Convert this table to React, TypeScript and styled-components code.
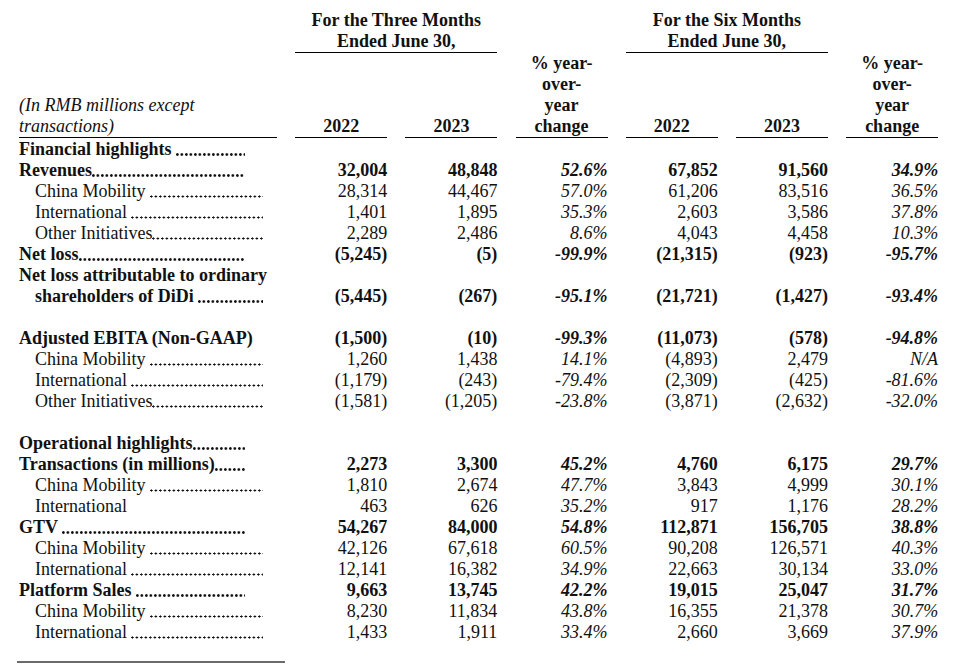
import React from 'react';
import styled, { createGlobalStyle } from 'styled-components';

const GlobalStyle = createGlobalStyle`
  html, body {
    margin: 0;
    padding: 0;
    background: #ffffff;
  }
  body {
    font-family: "Liberation Serif", "Times New Roman", serif;
    font-size: 18px;
    color: #111;
  }
`;

const COLS = '258px repeat(6, 92px)';

const Page = styled.div`
  padding: 9.7px 0 0 19px;
  width: 960px;
  height: 668px;
  box-sizing: border-box;
  overflow: hidden;
`;

const HeaderTop = styled.div`
  display: grid;
  grid-template-columns: ${COLS};
  column-gap: 18.2px;
  line-height: 21px;
`;

const GroupHead = styled.div<{ $col: number }>`
  grid-column: ${(p) => p.$col} / span 2;
  text-align: center;
  font-weight: bold;
  border-bottom: 1.5px solid #000;
`;

const HeaderBottom = styled.div`
  display: grid;
  grid-template-columns: ${COLS};
  column-gap: 18.2px;
  line-height: 21px;
  align-items: end;
`;

const LabelHead = styled.div`
  font-style: italic;
  border-bottom: 1.5px solid #000;
`;

const ColHead = styled.div`
  text-align: center;
  font-weight: bold;
  border-bottom: 1.5px solid #000;
`;

const Body = styled.div`
  padding-top: 1.5px;
`;

const Row = styled.div`
  display: grid;
  grid-template-columns: ${COLS};
  column-gap: 18.2px;
  line-height: 21px;
  height: 21px;
  white-space: nowrap;
`;

const Spacer = styled.div`
  height: 21px;
`;

const Label = styled.div<{ $indent?: boolean; $bold?: boolean; $end: number }>`
  display: flex;
  width: ${(p) => p.$end - 19}px;
  padding-left: ${(p) => (p.$indent ? 16 : 0)}px;
  box-sizing: border-box;
  font-weight: ${(p) => (p.$bold ? 'bold' : 'normal')};
`;

const LabelText = styled.span`
  white-space: pre;
`;

/* dot leader, drawn as a row of periods at the baseline */
const Leader = styled.span<{ $bold?: boolean }>`
  flex: 1 1 0;
  min-width: 0;
  height: 21px;
  background-image: radial-gradient(
    circle,
    #111 ${(p) => (p.$bold ? 1.15 : 0.9)}px,
    transparent ${(p) => (p.$bold ? 1.5 : 1.25)}px
  );
  background-size: 4.5px 21px;
  background-repeat: repeat-x;
  background-position: -0.9px 5.2px;
`;

const Num = styled.div<{ $bold?: boolean; $pct?: boolean }>`
  text-align: right;
  font-weight: ${(p) => (p.$bold ? 'bold' : 'normal')};
  font-style: ${(p) => (p.$pct ? 'italic' : 'normal')};
`;

const FootRule = styled.div`
  margin: 18px 0 0 -2px;
  width: 268px;
  height: 2px;
  background: #6b6b6b;
`;

type Line = {
  label: string;
  bold?: boolean;
  indent?: boolean;
  dots?: boolean;
  values?: string[];
};

const lines: (Line | null)[] = [
  { label: 'Financial highlights ', bold: true, dots: true },
  { label: 'Revenues', bold: true, dots: true, values: ['32,004', '48,848', '52.6%', '67,852', '91,560', '34.9%'] },
  { label: 'China Mobility ', indent: true, dots: true, values: ['28,314', '44,467', '57.0%', '61,206', '83,516', '36.5%'] },
  { label: 'International ', indent: true, dots: true, values: ['1,401', '1,895', '35.3%', '2,603', '3,586', '37.8%'] },
  { label: 'Other Initiatives', indent: true, dots: true, values: ['2,289', '2,486', '8.6%', '4,043', '4,458', '10.3%'] },
  { label: 'Net loss', bold: true, dots: true, values: ['(5,245)', '(5)', '-99.9%', '(21,315)', '(923)', '-95.7%'] },
  { label: 'Net loss attributable to ordinary', bold: true },
  { label: 'shareholders of DiDi ', bold: true, indent: true, dots: true, values: ['(5,445)', '(267)', '-95.1%', '(21,721)', '(1,427)', '-93.4%'] },
  null,
  { label: 'Adjusted EBITA (Non-GAAP)', bold: true, values: ['(1,500)', '(10)', '-99.3%', '(11,073)', '(578)', '-94.8%'] },
  { label: 'China Mobility ', indent: true, dots: true, values: ['1,260', '1,438', '14.1%', '(4,893)', '2,479', 'N/A'] },
  { label: 'International ', indent: true, dots: true, values: ['(1,179)', '(243)', '-79.4%', '(2,309)', '(425)', '-81.6%'] },
  { label: 'Other Initiatives', indent: true, dots: true, values: ['(1,581)', '(1,205)', '-23.8%', '(3,871)', '(2,632)', '-32.0%'] },
  null,
  { label: 'Operational highlights', bold: true, dots: true },
  { label: 'Transactions (in millions)', bold: true, dots: true, values: ['2,273', '3,300', '45.2%', '4,760', '6,175', '29.7%'] },
  { label: 'China Mobility ', indent: true, dots: true, values: ['1,810', '2,674', '47.7%', '3,843', '4,999', '30.1%'] },
  { label: 'International', indent: true, values: ['463', '626', '35.2%', '917', '1,176', '28.2%'] },
  { label: 'GTV ', bold: true, dots: true, values: ['54,267', '84,000', '54.8%', '112,871', '156,705', '38.8%'] },
  { label: 'China Mobility ', indent: true, dots: true, values: ['42,126', '67,618', '60.5%', '90,208', '126,571', '40.3%'] },
  { label: 'International ', indent: true, dots: true, values: ['12,141', '16,382', '34.9%', '22,663', '30,134', '33.0%'] },
  { label: 'Platform Sales ', bold: true, dots: true, values: ['9,663', '13,745', '42.2%', '19,015', '25,047', '31.7%'] },
  { label: 'China Mobility ', indent: true, dots: true, values: ['8,230', '11,834', '43.8%', '16,355', '21,378', '30.7%'] },
  { label: 'International ', indent: true, dots: true, values: ['1,433', '1,911', '33.4%', '2,660', '3,669', '37.9%'] },
];

const PctHead = () => (
  <ColHead>
    % year-
    <br />
    over-
    <br />
    year
    <br />
    change
  </ColHead>
);

function App() {
  return (
    <>
      <GlobalStyle />
      <Page>
        <HeaderTop>
          <GroupHead $col={2}>
            For the Three Months
            <br />
            Ended June 30,
          </GroupHead>
          <GroupHead $col={5}>
            For the Six Months
            <br />
            Ended June 30,
          </GroupHead>
        </HeaderTop>
        <HeaderBottom>
          <LabelHead>
            (In RMB millions except
            <br />
            transactions)
          </LabelHead>
          <ColHead>2022</ColHead>
          <ColHead>2023</ColHead>
          <PctHead />
          <ColHead>2022</ColHead>
          <ColHead>2023</ColHead>
          <PctHead />
        </HeaderBottom>
        <Body>
          {lines.map((line, i) =>
            line === null ? (
              <Spacer key={i} />
            ) : (
              <Row key={i}>
                <Label $bold={line.bold} $indent={line.indent} $end={line.indent ? 263 : 245}>
                  <LabelText>{line.label}</LabelText>
                  {line.dots && <Leader $bold={line.bold} />}
                </Label>
                {line.values?.map((v, j) => (
                  <Num key={j} $bold={line.bold} $pct={j === 2 || j === 5}>
                    {v}
                  </Num>
                ))}
              </Row>
            )
          )}
        </Body>
        <FootRule />
      </Page>
    </>
  );
}

export default App;
